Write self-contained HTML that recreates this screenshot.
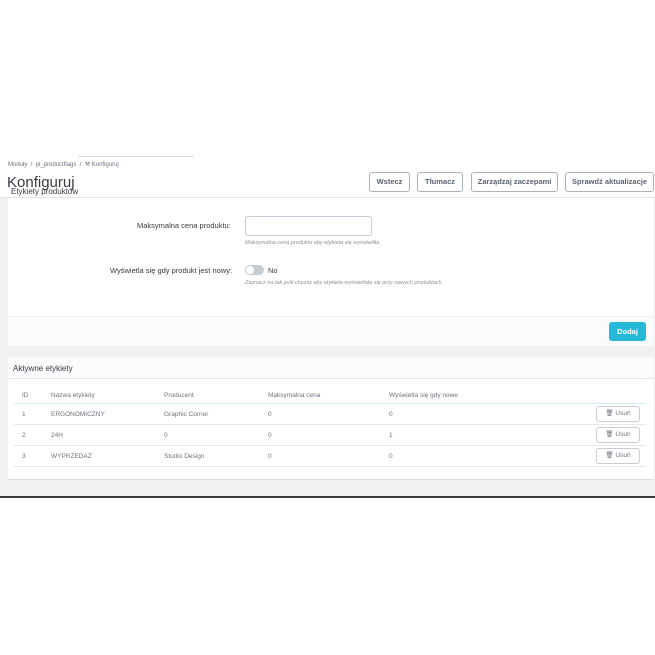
<!DOCTYPE html>
<html><head><meta charset="utf-8"><style>
*{box-sizing:border-box;margin:0;padding:0}
body{width:655px;height:655px;background:#fff;font-family:"Liberation Sans",sans-serif;position:relative;overflow:hidden;color:#363a41}
.a{position:absolute}
.btn{position:absolute;top:172px;height:20px;border:1px solid #a8b3bb;border-radius:3px;background:#fff;font-size:7.5px;font-weight:bold;color:#5b6470;text-align:center;line-height:18px}
.t{position:absolute;font-size:6.5px;color:#6c757d}
.row{position:absolute;left:14px;width:632px;border-bottom:1px solid #e5e8ea;height:21px}
.us{position:absolute;left:596px;width:44px;height:16px;border:1px solid #c8ced3;border-radius:3px;background:#fff;font-size:6.5px;color:#6c757d;line-height:14px;text-align:center}
</style></head><body>
<div class="a" style="left:78px;top:156px;width:116px;height:1px;background:#d8dcdf"></div>
<div class="a" style="left:8px;top:161px;font-size:6px;color:#6c757d">Moduły &nbsp;/&nbsp; pi_productflags &nbsp;/&nbsp; ⚒ Konfiguruj</div>
<div class="a" style="left:7px;top:174px;font-size:15px;color:#363a41">Konfiguruj</div>
<div class="a" style="left:11px;top:187px;font-size:8px;color:#363a41">Etykiety produktów</div>
<div class="btn" style="left:369px;width:41px">Wstecz</div>
<div class="btn" style="left:417px;width:46px">Tłumacz</div>
<div class="btn" style="left:471px;width:87px">Zarządzaj zaczepami</div>
<div class="btn" style="left:565px;width:89px">Sprawdź aktualizacje</div>
<div class="a" style="left:0;top:197px;width:655px;height:299px;background:#eff1f2;border-top:1px solid #e2e5e7"></div>
<div class="a" style="left:0;top:496px;width:655px;height:2px;background:#3a3a3e"></div>
<div class="a" style="left:8px;top:198px;width:646px;height:148px;background:#fff;border-bottom:1px solid #dde1e4"></div>
<div class="a" style="left:8px;top:316px;width:646px;height:30px;background:#fafbfc;border-top:1px solid #eceff1"></div>
<div class="a" style="left:137px;top:221px;font-size:7.5px;color:#363a41">Maksymalna cena produktu:</div>
<div class="a" style="left:245px;top:216px;width:127px;height:20px;border:1px solid #c8ced3;border-radius:3px"></div>
<div class="a" style="left:245px;top:240px;font-size:5.5px;font-style:italic;color:#8a939b">Maksymalna cena produktu aby etykieta się wyświetliła.</div>
<div class="a" style="left:110px;top:266px;font-size:7.5px;color:#363a41">Wyświetla się gdy produkt jest nowy:</div>
<div class="a" style="left:245px;top:265px;width:19px;height:10px;border-radius:5px;background:#c5ccd2"></div>
<div class="a" style="left:246px;top:266px;width:8px;height:8px;border-radius:50%;background:#fff"></div>
<div class="a" style="left:268px;top:266px;font-size:7.5px">No</div>
<div class="a" style="left:245px;top:280px;font-size:5.5px;font-style:italic;color:#8a939b">Zaznacz na tak jeśli chcesz aby etykieta wyświetlała się przy nowych produktach</div>
<div class="a" style="left:609px;top:322px;width:37px;height:19px;background:#25b9d7;border-radius:3px;color:#fff;font-size:7.5px;font-weight:bold;text-align:center;line-height:19px">Dodaj</div>
<div class="a" style="left:8px;top:357px;width:646px;height:123px;background:#fff;border-bottom:1px solid #dde1e4"></div>
<div class="a" style="left:8px;top:357px;width:646px;height:22px;background:#fafbfc;border-bottom:1px solid #e5e8ea"></div>
<div class="a" style="left:13px;top:364px;font-size:8px;color:#363a41">Aktywne etykiety</div>
<div class="row" style="top:385px;height:19px;border-bottom:1px solid #d5eef5"></div>
<div class="t" style="left:22px;top:392px">ID</div><div class="t" style="left:51px;top:392px">Nazwa etykiety</div><div class="t" style="left:164px;top:392px">Producent</div><div class="t" style="left:268px;top:392px">Maksymalna cena</div><div class="t" style="left:389px;top:392px">Wyświetla się gdy nowe</div>
<div class="row" style="top:404px"></div><div class="row" style="top:425px"></div><div class="row" style="top:446px"></div>
<div class="t" style="left:22px;top:411px">1</div><div class="t" style="left:51px;top:411px">ERGONOMICZNY</div><div class="t" style="left:164px;top:411px">Graphic Corner</div><div class="t" style="left:268px;top:411px">0</div><div class="t" style="left:389px;top:411px">0</div>
<div class="t" style="left:22px;top:432px">2</div><div class="t" style="left:51px;top:432px">24H</div><div class="t" style="left:164px;top:432px">0</div><div class="t" style="left:268px;top:432px">0</div><div class="t" style="left:389px;top:432px">1</div>
<div class="t" style="left:22px;top:453px">3</div><div class="t" style="left:51px;top:453px">WYPRZEDAZ</div><div class="t" style="left:164px;top:453px">Studio Design</div><div class="t" style="left:268px;top:453px">0</div><div class="t" style="left:389px;top:453px">0</div>
<div class="us" style="top:406px">🗑 Usuń</div><div class="us" style="top:427px">🗑 Usuń</div><div class="us" style="top:448px">🗑 Usuń</div>
</body></html>
